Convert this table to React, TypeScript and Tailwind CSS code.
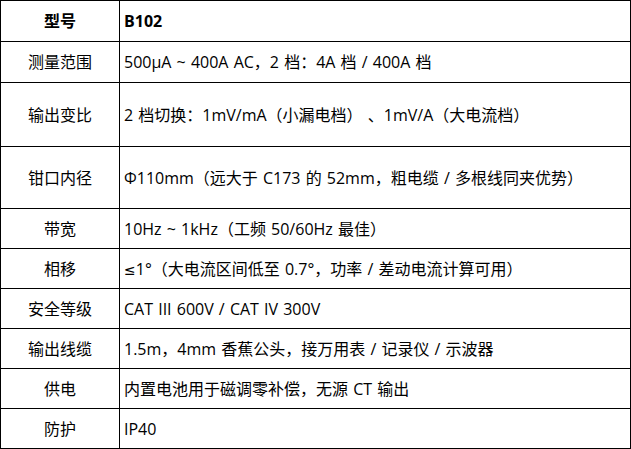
import type { ReactNode } from 'react';

const rows: [string, ReactNode, string][] = [
  ['型号', 'B102', 'h-[41px]'],
  ['测量范围', '500μA ~ 400A AC，2 档：4A 档 / 400A 档', 'h-[41px]'],
  ['输出变比', '2 档切换：1mV/mA（小漏电档） 、1mV/A（大电流档）', 'h-[64px]'],
  ['钳口内径', 'Φ110mm（远大于 C173 的 52mm，粗电缆 / 多根线同夹优势）', 'h-[62px]'],
  ['带宽', '10Hz ~ 1kHz（工频 50/60Hz 最佳）', 'h-[40px]'],
  [
    '相移',
    <>
      <span className="font-['DejaVu_Sans',sans-serif] text-[14px]">≤</span>1°（大电流区间低至 0.7°，功率 / 差动电流计算可用）
    </>,
    'h-[40px]',
  ],
  ['安全等级', 'CAT III 600V / CAT IV 300V', 'h-[40px]'],
  ['输出线缆', '1.5m，4mm 香蕉公头，接万用表 / 记录仪 / 示波器', 'h-[40px]'],
  ['供电', '内置电池用于磁调零补偿，无源 CT 输出', 'h-[40px]'],
  ['防护', 'IP40', 'h-[40px]'],
];

export default function App() {
  return (
    <div className="w-[631px] h-[449px] bg-white font-['Open_Sans','Noto_Sans_CJK_SC',sans-serif] text-[16px] text-black [word-spacing:1px]">
      <table className="w-[631px] border-collapse table-fixed">
        <colgroup>
          <col className="w-[119px]" />
          <col />
        </colgroup>
        <tbody>
          {rows.map(([label, value, h], i) => (
            <tr key={label} className={h}>
              <td className={`border border-black text-center p-0 ${i === 0 ? 'font-bold' : ''}`}>{label}</td>
              <td className={`border border-black px-[4px] py-0 ${i === 0 ? 'font-bold' : ''}`}>{value}</td>
            </tr>
          ))}
        </tbody>
      </table>
    </div>
  );
}
